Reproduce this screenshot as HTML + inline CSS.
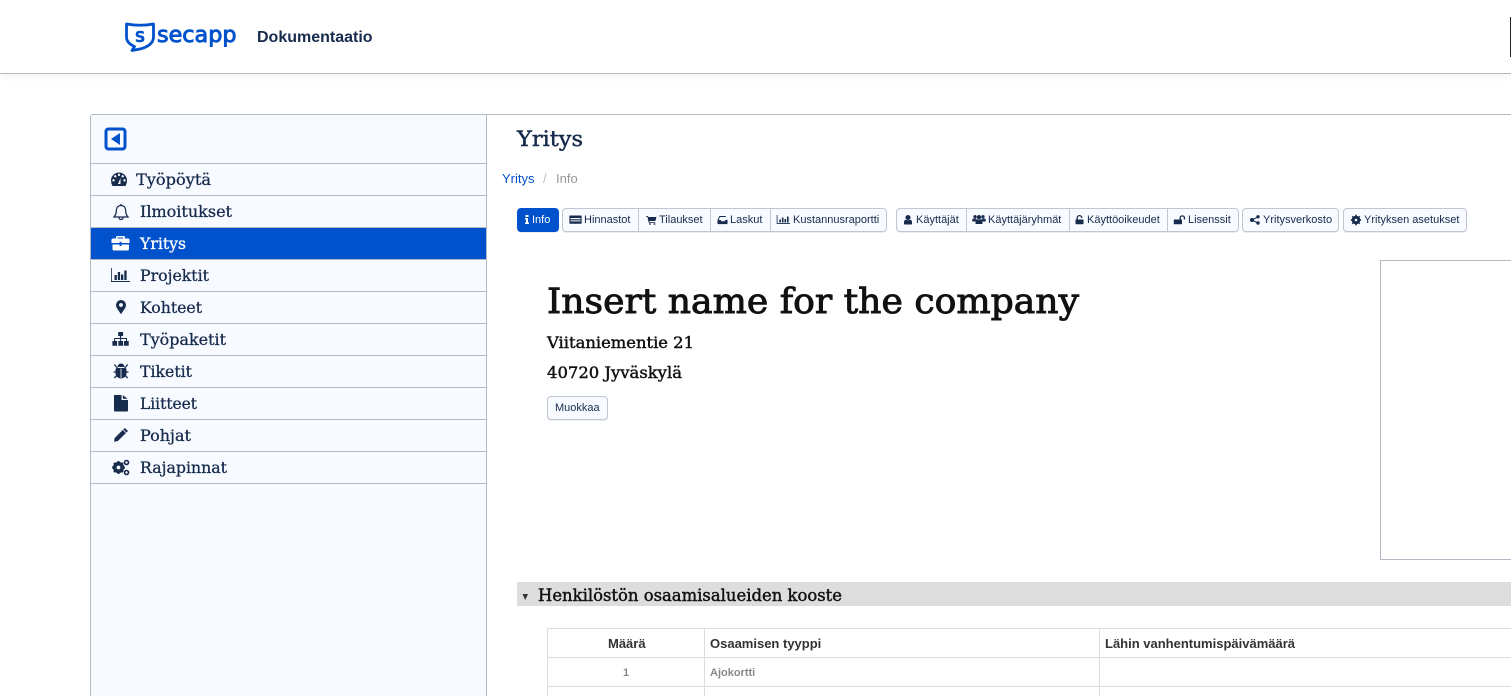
<!DOCTYPE html>
<html lang="fi">
<head>
<meta charset="utf-8">
<title>Yritys</title>
<style>
html,body{margin:0;padding:0;background:#fff;width:1511px;height:696px;overflow:hidden}
body{position:relative;font-family:"Liberation Sans",sans-serif;color:#172b4d}
.a{position:absolute}
#hdr{left:0;top:0;width:1511px;height:73px;background:#fff;border-bottom:1px solid #b3b9c4;box-shadow:0 3px 8px rgba(0,0,0,.05)}
#side{left:90px;top:114px;width:395px;height:582px;background:#f7faff;border-left:1px solid #b3bac5;border-right:1px solid #b3bac5;border-top:1px solid #b3bac5;border-top-left-radius:3px}
.line{left:91px;width:395px;height:1px;background:#b3bac5}
.btn{box-sizing:border-box;height:24px;top:208px;background:#f7faff;border:1px solid #c1c7d0;border-radius:4px;box-shadow:0 1px 0 rgba(9,30,66,.08)}
.dv{top:209px;width:1px;height:22px;background:#c1c7d0}
.t{font-size:11px;line-height:14px;top:213px;white-space:nowrap;color:#172b4d}
.th{font-size:13px;font-weight:bold;color:#333;line-height:16px;white-space:nowrap}
.td{font-size:11px;font-weight:bold;color:#888;line-height:14px;white-space:nowrap}
svg{display:block}
#ov{left:0;top:0}
</style>
</head>
<body>
<div class="a" id="hdr"></div>
<div class="a" style="left:1510px;top:17px;width:1px;height:40px;background:#222"></div>
<div class="a" style="left:257px;top:28px;font-size:16px;font-weight:bold;line-height:19px;color:#172b4d">Dokumentaatio</div>

<div class="a" id="side"></div>
<div class="a" style="left:486px;top:114px;width:1025px;height:1px;background:#b3bac5"></div>
<div class="a line" style="top:163px"></div>
<div class="a line" style="top:195px"></div>
<div class="a line" style="top:227px"></div>
<div class="a" style="left:91px;top:228px;width:395px;height:31px;background:#0052cc"></div>
<div class="a line" style="top:259px"></div>
<div class="a line" style="top:291px"></div>
<div class="a line" style="top:323px"></div>
<div class="a line" style="top:355px"></div>
<div class="a line" style="top:387px"></div>
<div class="a line" style="top:419px"></div>
<div class="a line" style="top:451px"></div>
<div class="a line" style="top:483px"></div>

<!-- breadcrumbs -->
<div class="a" style="left:502px;top:171px;font-size:13px;line-height:15px;color:#0052cc">Yritys</div>
<div class="a" style="left:543px;top:171px;font-size:13px;line-height:15px;color:#bbb">/</div>
<div class="a" style="left:556px;top:171px;font-size:13px;line-height:15px;color:#999">Info</div>

<!-- buttons -->
<div class="a btn" style="left:517px;width:42px;background:#0052cc;border-color:#0052cc"></div>
<div class="a btn" style="left:562px;width:325px"></div>
<div class="a dv" style="left:638px"></div>
<div class="a dv" style="left:710px"></div>
<div class="a dv" style="left:770px"></div>
<div class="a btn" style="left:896px;width:343px"></div>
<div class="a dv" style="left:966px"></div>
<div class="a dv" style="left:1069px"></div>
<div class="a dv" style="left:1167px"></div>
<div class="a btn" style="left:1242px;width:97px"></div>
<div class="a btn" style="left:1343px;width:124px"></div>
<div class="a t" style="left:532px;color:#fff">Info</div>
<div class="a t" style="left:584px">Hinnastot</div>
<div class="a t" style="left:659px">Tilaukset</div>
<div class="a t" style="left:730px">Laskut</div>
<div class="a t" style="left:793px">Kustannusraportti</div>
<div class="a t" style="left:916px">Käyttäjät</div>
<div class="a t" style="left:988px">Käyttäjäryhmät</div>
<div class="a t" style="left:1087px">Käyttöoikeudet</div>
<div class="a t" style="left:1188px">Lisenssit</div>
<div class="a t" style="left:1263px">Yritysverkosto</div>
<div class="a t" style="left:1364px">Yrityksen asetukset</div>

<!-- Muokkaa -->
<div class="a btn" style="left:547px;top:396px;width:61px"></div>
<div class="a t" style="left:555px;top:401px">Muokkaa</div>

<!-- logo box -->
<div class="a" style="left:1380px;top:260px;width:131px;height:298px;border-left:1px solid #b3bac5;border-top:1px solid #b3bac5;border-bottom:1px solid #b3bac5;box-sizing:content-box"></div>

<!-- section bar -->
<div class="a" style="left:517px;top:582px;width:994px;height:24px;background:#ddd"></div>

<!-- table -->
<div class="a" style="left:547px;top:628px;width:964px;height:1px;background:#ddd"></div>
<div class="a" style="left:547px;top:657px;width:964px;height:1px;background:#ddd"></div>
<div class="a" style="left:547px;top:686px;width:964px;height:1px;background:#ddd"></div>
<div class="a" style="left:547px;top:628px;width:1px;height:68px;background:#ddd"></div>
<div class="a" style="left:704px;top:628px;width:1px;height:68px;background:#ddd"></div>
<div class="a" style="left:1099px;top:628px;width:1px;height:68px;background:#ddd"></div>
<div class="a th" style="left:608px;top:636px">Määrä</div>
<div class="a th" style="left:710px;top:636px">Osaamisen tyyppi</div>
<div class="a th" style="left:1105px;top:636px">Lähin vanhentumispäivämäärä</div>
<div class="a td" style="left:623px;top:666px">1</div>
<div class="a td" style="left:710px;top:666px">Ajokortti</div>

<svg class="a" id="ov" width="1511" height="696" viewBox="0 0 1511 696" xmlns="http://www.w3.org/2000/svg">
  <!-- secapp logo -->
  <path d="M126.500 24 Q140 26.500 153.500 24 V37 Q153.500 45 141 48.800 L132 50.500 L134.500 46.500 Q126.500 43 126.500 37Z" fill="none" stroke="#0052cc" stroke-width="2.800" stroke-linejoin="round"/>
  <text x="134.800" y="42" font-family="DejaVu Sans" font-weight="bold" font-size="20" fill="#0052cc" textLength="10.500" lengthAdjust="spacingAndGlyphs">s</text>
  <text x="157" y="42" font-family="DejaVu Sans" font-size="22" fill="#0052cc" stroke="#0052cc" stroke-width=".9" textLength="79.500" lengthAdjust="spacingAndGlyphs">secapp</text>

  <!-- collapse icon -->
  <rect x="106" y="129" width="19" height="20" rx="2.500" fill="#f7faff" stroke="#0052cc" stroke-width="3"/>
  <path d="M120 133 V145 L111 139Z" fill="#0052cc"/>

  <!-- headings, slab -->
  <g font-family="DejaVu Serif" fill="#172b4d" stroke="#172b4d" stroke-width=".3">
    <text x="517" y="146" font-size="21" stroke-width=".45" textLength="66" lengthAdjust="spacingAndGlyphs">Yritys</text>
    <g font-size="15.500">
      <text x="136" y="185" textLength="75" lengthAdjust="spacingAndGlyphs">Työpöytä</text>
      <text x="140" y="217" textLength="92" lengthAdjust="spacingAndGlyphs">Ilmoitukset</text>
      <text x="140" y="249" textLength="46" lengthAdjust="spacingAndGlyphs" fill="#fff" stroke="#fff">Yritys</text>
      <text x="140" y="281" textLength="69" lengthAdjust="spacingAndGlyphs">Projektit</text>
      <text x="140" y="313" textLength="62" lengthAdjust="spacingAndGlyphs">Kohteet</text>
      <text x="140" y="345" textLength="86" lengthAdjust="spacingAndGlyphs">Työpaketit</text>
      <text x="140" y="377" textLength="52" lengthAdjust="spacingAndGlyphs">Tiketit</text>
      <text x="140" y="409" textLength="57" lengthAdjust="spacingAndGlyphs">Liitteet</text>
      <text x="140" y="441" textLength="51" lengthAdjust="spacingAndGlyphs">Pohjat</text>
      <text x="140" y="473" textLength="87" lengthAdjust="spacingAndGlyphs">Rajapinnat</text>
    </g>
  </g>
  <g font-family="DejaVu Serif" fill="#111" stroke="#111" stroke-width=".45">
    <text x="547" y="313" font-size="35" stroke-width=".9" textLength="532" lengthAdjust="spacingAndGlyphs">Insert name for the company</text>
    <text x="547" y="348" font-size="15.500" textLength="147" lengthAdjust="spacingAndGlyphs">Viitaniementie 21</text>
    <text x="547" y="378" font-size="15.500" textLength="135" lengthAdjust="spacingAndGlyphs">40720 Jyväskylä</text>
    <text x="538" y="601" font-size="16.500" textLength="304" lengthAdjust="spacingAndGlyphs">Henkilöstön osaamisalueiden kooste</text>
  </g>
  <path d="M522.500 594 H528 L525.200 600Z" fill="#333"/>

  <!-- sidebar icons -->
  <g fill="#172b4d">
    <!-- dashboard -->
    <path fill-rule="evenodd" d="M119 172.500 a8 8 0 0 0 -8 8 q0 3 1.500 5.500 H125.500 q1.500 -2.500 1.500 -5.500 a8 8 0 0 0 -8 -8Z M113.500 181.500 a1.200 1.200 0 1 1 .01 0Z M115.300 177.500 a1.200 1.200 0 1 1 .01 0Z M119 176 a1.200 1.200 0 1 1 .01 0Z M122.700 177.500 a1.200 1.200 0 1 1 .01 0Z M124.500 181.500 a1.200 1.200 0 1 1 .01 0Z M118 184 L120.500 178 L120.500 184Z"/>
    <!-- bell -->
    <path d="M121 204 v1.500 M121 205.500 c-3.500 0 -4.700 2.800 -4.700 5.500 c0 3.500 -1.400 4.800 -2.300 6 h14 c-.9 -1.200 -2.300 -2.500 -2.300 -6 c0 -2.700 -1.200 -5.500 -4.700 -5.500Z M119 217.500 a2 2 0 0 0 4 0" fill="none" stroke="#172b4d" stroke-width="1.300"/>
    <!-- briefcase -->
    <path fill="#fff" fill-rule="evenodd" d="M118 236 h6 q1.500 0 1.500 1.500 v1 h3 q1.500 0 1.500 1.500 v3 h-8 v-1.200 h-2 v1.200 h-8 v-3 q0 -1.500 1.500 -1.500 h3 v-1 q0 -1.500 1.500 -1.500Z M118 237.500 v1 h6 v-1Z M113 244.500 h7 v1.500 h2 v-1.500 h7.500 V249 q0 1.500 -1.500 1.500 H114.500 q-1.500 0 -1.500 -1.500 Z" transform="translate(-.5 0)"/>
    <!-- chart -->
    <path d="M111.800 268 V281 H130 V282 H111 V268Z M114.500 275 h2.300 v5 h-2.300Z M117.800 272 h2.300 v8 h-2.300Z M121 274.500 h2.300 v5.500 h-2.300Z M124.300 270.500 h2.300 v9.500 h-2.300Z"/>
    <!-- pin -->
    <path fill-rule="evenodd" d="M121 300 a5 5 0 0 0 -5 5 c0 3 3.500 6.500 5 9.300 c1.500 -2.800 5 -6.300 5 -9.300 a5 5 0 0 0 -5 -5Z M121 303 a2 2 0 1 1 -.01 0Z"/>
    <!-- sitemap -->
    <path d="M118.300 332 h4.800 v4 h-1.900 v2 h5.800 v3 h1.700 v4.700 h-4.700 v-4.700 h2 v-2 h-4.900 v2 h2 v4.700 h-4.700 v-4.700 h1.700 v-2 h-5 v2 h2 v4.700 h-4.700 v-4.700 h1.700 v-3 h5.800 v-2 h-1.800Z"/>
    <!-- bug -->
    <path d="M117.500 367 a3.500 3.500 0 0 1 7 0Z M116.500 368 h9 l1 1 v4 c0 3 -2 5 -5.500 5.500 c-3.500 -.5 -5.500 -2.500 -5.500 -5.500 v-4Z"/>
    <path d="M114.300 364.500 l3 3.500 M127.700 364.500 l-3 3.500 M113.500 372 h3 M125.500 372 h3 M114.300 378 l2.500 -2.500 M127.700 378 l-2.500 -2.500" stroke="#172b4d" stroke-width="1.300" fill="none"/>
    <path d="M121 368.500 v9.500" stroke="#f7faff" stroke-width=".8"/>
    <!-- file -->
    <path d="M114 395 h7.500 v5 h6.500 v10.500 q0 1 -1 1 H115 q-1 0 -1 -1Z M122.800 395.300 L127.800 398.800 H122.800Z"/>
    <!-- pencil -->
    <path d="M124.800 428 l3.200 3 l-1.500 1.500 l-3.200 -3Z M122.700 430 l3.200 3 l-8 8 l-3.800 .8 l.5 -3.700Z"/>
    <!-- cogs -->
    <circle cx="118.500" cy="467.500" r="4.300" fill="none" stroke="#172b4d" stroke-width="2.600"/>
    <path d="M118.500 461 v13 M112 467.500 h13 M114 463 l9 9 M123 463 l-9 9" stroke="#172b4d" stroke-width="2"/>
    <circle cx="118.500" cy="467.500" r="1.900" fill="#f7faff"/>
    <circle cx="126.500" cy="462.500" r="2" fill="none" stroke="#172b4d" stroke-width="1.600"/>
    <circle cx="126.500" cy="472.500" r="2" fill="none" stroke="#172b4d" stroke-width="1.600"/>
  </g>

  <!-- button icons -->
  <path d="M525.500 215 h3 v2 h-3Z M525 218 h3 v4.500 h1 v1.500 h-4 v-1.500 h1 v-3 h-1Z" fill="#fff"/>
  <g fill="#172b4d">
    <path fill-rule="evenodd" d="M570 215.500 h11 q.6 0 .6 .6 v7 q0 .6 -.6 .6 h-11 q-.6 0 -.6 -.6 v-7 q0 -.6 .6 -.6Z M570.500 218 v1.200 h10 v-1.200Z M570.500 220.400 v1 h10 v-1Z"/>
    <path d="M646 216 h2 l.4 1 h8 l-1 4 h-6 l.2 1 h5.600 v.8 h-6.500 l-1.300 -6 h-1.400Z"/><circle cx="650" cy="224" r=".9"/><circle cx="654.500" cy="224" r=".9"/>
    <path fill-rule="evenodd" d="M719.500 216 h6 l2 4 v3.500 q0 .6 -.6 .6 h-8.800 q-.6 0 -.6 -.6 V220Z M720 217 l-1.300 3 h2 l.7 1.300 h3.200 l.7 -1.300 h2 l-1.300 -3Z"/>
    <path d="M777.500 215 v8 h12.500 v.9 h-13.300 v-8.900Z M779.300 219.500 h1.600 v3 h-1.600Z M781.900 217.500 h1.600 v5 h-1.600Z M784.500 219 h1.600 v3.500 h-1.600Z M787 216.500 h1.600 v6 h-1.600Z"/>
    <path d="M908 215 a2.500 2.500 0 1 1 -.01 0Z M904 224 v-1.500 q0 -2.700 2 -2.700 q2 1 4 0 q2 0 2 2.700 v1.500 q0 .5 -.8 .5 h-6.400 q-.8 0 -.8 -.5Z"/>
    <path d="M979 215 a2.200 2.200 0 1 1 -.01 0Z M975 215 a1.700 1.700 0 1 1 -.01 0Z M983 215 a1.700 1.700 0 1 1 -.01 0Z M975.500 223.500 v-2 q0 -2.300 1.500 -2.300 q2 1 4 0 q1.500 0 1.500 2.300 v2 q0 .5 -.6 .5 h-5.800 q-.6 0 -.6 -.5Z M973.500 218.500 h2.800 l-1 3 h-3 v-1.500 q0 -1.500 1.200 -1.500Z M984.500 218.500 h-2.800 l1 3 h3 v-1.500 q0 -1.500 -1.200 -1.500Z"/>
    <path fill-rule="evenodd" d="M1077 219.500 v-1.500 a3 3 0 0 1 6 0 h-1.300 a1.700 1.700 0 0 0 -3.400 0 v1.500 h5 q.7 0 .7 .7 v3.400 q0 .7 -.7 .7 h-6.600 q-.7 0 -.7 -.7 v-3.400 q0 -.7 .7 -.7Z" transform="translate(-.5 0)"/>
    <path d="M1174.500 219.500 h5 v-1.500 a2.800 2.800 0 0 1 5.600 0 v1.500 h-1.300 v-1.500 a1.500 1.500 0 0 0 -3 0 v1.500 h.5 q.7 0 .7 .7 v3.400 q0 .7 -.7 .7 h-6.800 q-.7 0 -.7 -.7 v-3.400 q0 -.7 .7 -.7Z"/>
    <circle cx="1252" cy="220" r="2"/><circle cx="1258" cy="216.800" r="1.700"/><circle cx="1258" cy="223" r="1.700"/>
    <path d="M1252 220 L1258 216.800 M1252 220 L1258 223" stroke="#172b4d" stroke-width="1"/>
    <circle cx="1356" cy="220" r="3.200" fill="none" stroke="#172b4d" stroke-width="2.200"/>
    <path d="M1356 214.800 v10.400 M1350.800 220 h10.400 M1352.300 216.300 l7.400 7.400 M1359.700 216.300 l-7.400 7.400" stroke="#172b4d" stroke-width="1.600"/>
    <circle cx="1356" cy="220" r="1.300" fill="#f7faff"/>
  </g>
</svg>
</body>
</html>
